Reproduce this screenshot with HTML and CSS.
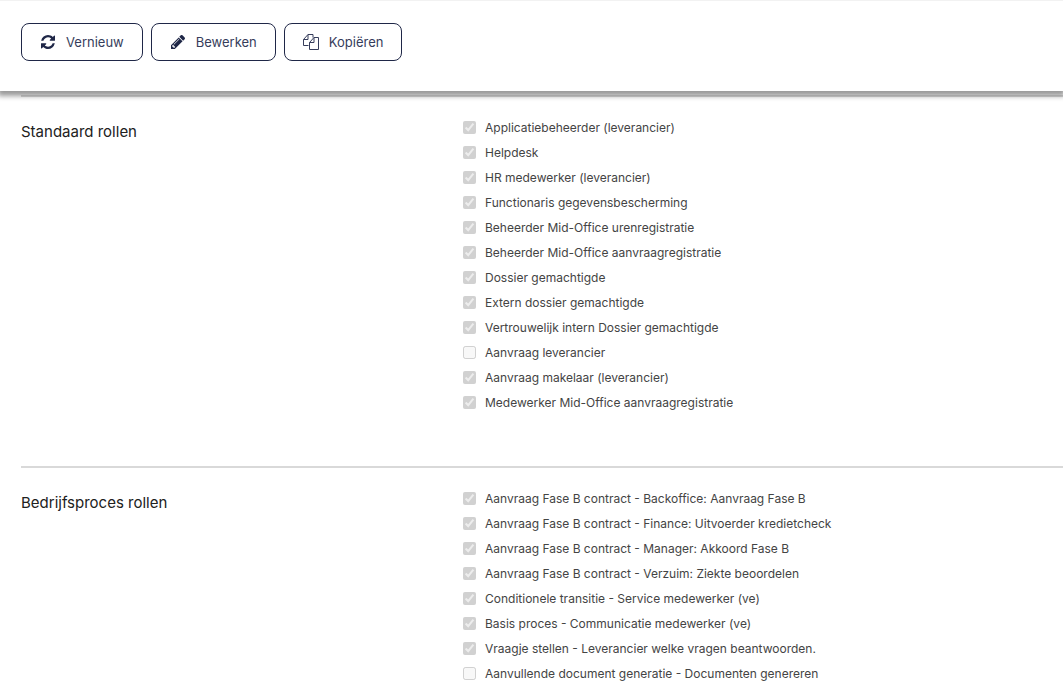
FILE: index.html
```
<!DOCTYPE html>
<html lang="nl">
<head>
<meta charset="UTF-8">
<meta name="viewport" content="width=device-width, initial-scale=1.0">
<title>Rollen</title>
<link rel="stylesheet" href="styles.css">
</head>
<body>

<header class="toolbar">
    <button type="button" class="btn">
        <svg class="icon icon-small" viewBox="0 0 1536 1536" aria-hidden="true"><path d="M1511 928q0 5-1 7-64 268-268 434.500t-478 166.500q-146 0-282.500-55t-243.500-157l-129 129q-19 19-45 19t-45-19-19-45v-448q0-26 19-45t45-19h448q26 0 45 19t19 45-19 45l-137 137q71 66 161 102t187 36q134 0 250-65t186-179q11-17 53-117 8-23 30-23h192q13 0 22.500 9.500t9.500 22.500zm25-800v448q0 26-19 45t-45 19h-448q-26 0-45-19t-19-45 19-45l138-138q-148-137-349-137-134 0-250 65t-186 179q-11 17-53 117-8 23-30 23h-199q-13 0-22.500-9.500t-9.500-22.500v-7q65-268 270-434.500t480-166.500q146 0 284 55.500t245 156.500l130-129q19-19 45-19t45 19 19 45z"/></svg>
        Vernieuw
    </button>
    <button type="button" class="btn">
        <svg class="icon icon-small" viewBox="0 150 1515 1515" aria-hidden="true"><path d="M363 1536l91-91-235-235-91 91v107h128v128h107zm523-928q0-22-22-22-10 0-17 7l-542 542q-7 7-7 17 0 22 22 22 10 0 17-7l542-542q7-7 7-17zm-54-192l416 416-832 832h-416v-416zm683 96q0 53-37 90l-166 166-416-416 166-165q36-38 90-38 53 0 91 38l235 234q37 39 37 91z"/></svg>
        Bewerken
    </button>
    <button type="button" class="btn">
        <svg class="icon icon-line" viewBox="0 0 16 16" aria-hidden="true"><path d="M5.500 11.500h-5V5.500l4.500-5h5v3M5 .5v5H.5M6.500 15.500V8.500l4.500-5h4.500v12zM11 3.500v5H6.500"/></svg>
        Kopiëren
    </button>
</header>

<main class="content">
    <section class="role-group">
        <h2>Standaard rollen</h2>
        <div class="roles">
            <label><input type="checkbox" checked disabled>Applicatiebeheerder (leverancier)</label>
            <label><input type="checkbox" checked disabled>Helpdesk</label>
            <label><input type="checkbox" checked disabled>HR medewerker (leverancier)</label>
            <label><input type="checkbox" checked disabled>Functionaris gegevensbescherming</label>
            <label><input type="checkbox" checked disabled>Beheerder Mid-Office urenregistratie</label>
            <label><input type="checkbox" checked disabled>Beheerder Mid-Office aanvraagregistratie</label>
            <label><input type="checkbox" checked disabled>Dossier gemachtigde</label>
            <label><input type="checkbox" checked disabled>Extern dossier gemachtigde</label>
            <label><input type="checkbox" checked disabled>Vertrouwelijk intern Dossier gemachtigde</label>
            <label><input type="checkbox" disabled>Aanvraag leverancier</label>
            <label><input type="checkbox" checked disabled>Aanvraag makelaar (leverancier)</label>
            <label><input type="checkbox" checked disabled>Medewerker Mid-Office aanvraagregistratie</label>
        </div>
    </section>

    <section class="role-group">
        <h2>Bedrijfsproces rollen</h2>
        <div class="roles">
            <label><input type="checkbox" checked disabled>Aanvraag Fase B contract - Backoffice: Aanvraag Fase B</label>
            <label><input type="checkbox" checked disabled>Aanvraag Fase B contract - Finance: Uitvoerder kredietcheck</label>
            <label><input type="checkbox" checked disabled>Aanvraag Fase B contract - Manager: Akkoord Fase B</label>
            <label><input type="checkbox" checked disabled>Aanvraag Fase B contract - Verzuim: Ziekte beoordelen</label>
            <label><input type="checkbox" checked disabled>Conditionele transitie - Service medewerker (ve)</label>
            <label><input type="checkbox" checked disabled>Basis proces - Communicatie medewerker (ve)</label>
            <label><input type="checkbox" checked disabled>Vraagje stellen - Leverancier welke vragen beantwoorden.</label>
            <label><input type="checkbox" disabled>Aanvullende document generatie - Documenten genereren</label>
        </div>
    </section>
</main>

</body>
</html>
```
FILE: styles.css
```
body {
    margin: 0;
    background-color: #fff;
    color: #212121;
    font-family: Inter, "Liberation Sans", sans-serif;
    font-size: 12px;
}

/* Toolbar */
.toolbar {
    position: relative;
    display: flex;
    gap: 8px;
    padding: 22px 21px 30px;
    border-top: 1px solid #f2f2f2;
    background-color: #fff;
    box-shadow: 0 3px 5px 2px rgba(0, 0, 0, 0.4);
}
.btn {
    display: flex;
    align-items: center;
    gap: 10px;
    height: 38px;
    padding: 0 18px;
    border: 1px solid #1f2747;
    border-radius: 8px;
    background-color: #fff;
    color: #363d5b;
    font-family: inherit;
    font-size: 13px;
}
.icon {
    width: 16px;
    height: 16px;
    fill: #1f2747;
}
.icon-small {
    width: 14px;
    height: 14px;
    margin: 0 1px;
}
.icon-line {
    fill: none;
    stroke: #363d5b;
}

/* Role groups */
.content {
    padding: 4px 0 0 21px;
}
.role-group {
    display: flex;
    padding: 18px 0 51px;
    border-top: 2px solid #d9d9d9;
}
.role-group:last-child {
    padding-bottom: 0;
}
.role-group h2 {
    flex: 0 0 442px;
    margin: 0;
    padding-top: 7px;
    font-size: 15px;
    font-weight: 400;
    line-height: 20px;
}
.roles {
    flex: 1;
}
.roles label {
    display: flex;
    align-items: center;
    gap: 9px;
    height: 25px;
    color: #444;
}
.roles input {
    margin: 0;
}
```
